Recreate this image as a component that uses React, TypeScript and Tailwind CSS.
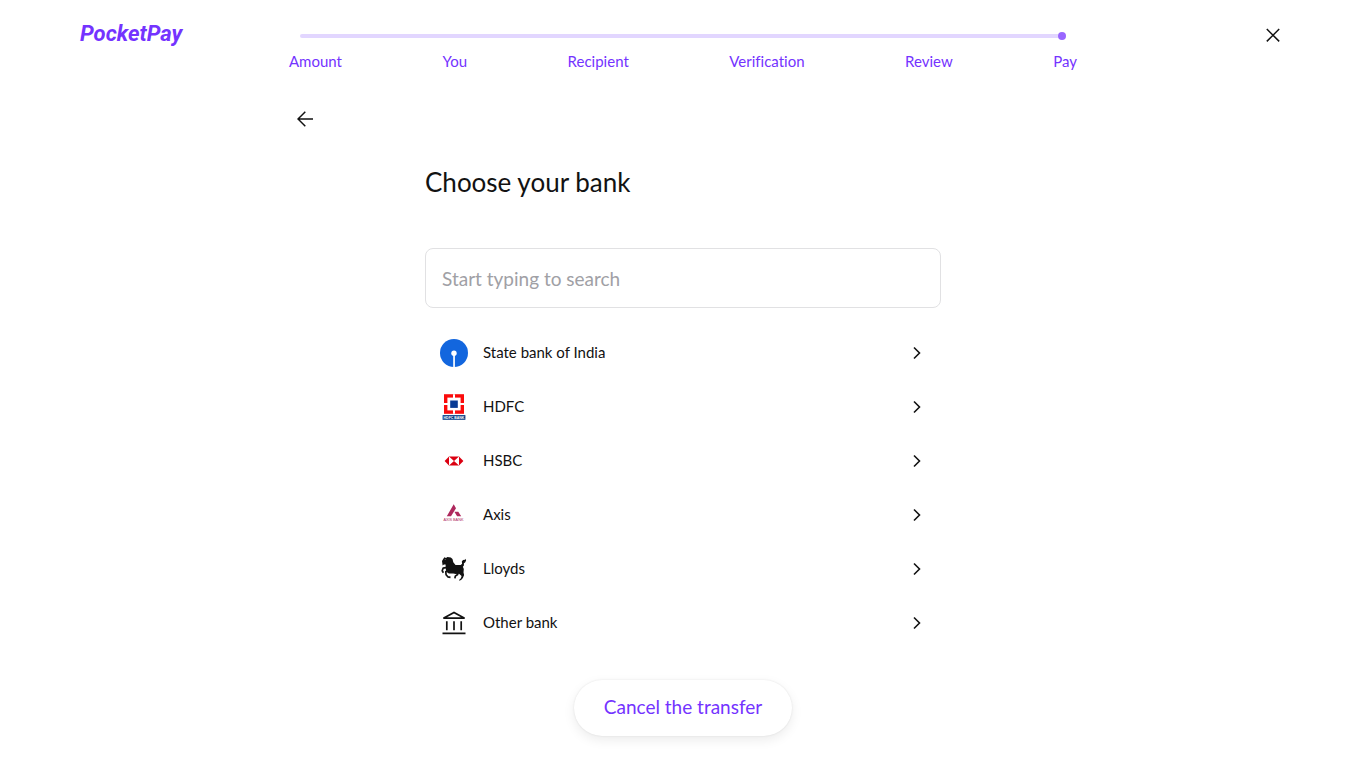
import type { ReactNode } from 'react';

const steps = ['Amount', 'You', 'Recipient', 'Verification', 'Review', 'Pay'];

function SbiLogo() {
  return (
    <svg viewBox="0 0 28 28" className="size-7" aria-hidden="true">
      <circle cx="14" cy="14" r="14" fill="#1266de" />
      <circle cx="14" cy="14.2" r="2.7" fill="#fff" />
      <path d="M13.2 14h1.7v14h-1.7z" fill="#fff" />
    </svg>
  );
}

function HdfcLogo() {
  return (
    <svg viewBox="0 0 28 28" className="size-7" aria-hidden="true">
      <path d="M4 1.2h20v19.6H4z" fill="#fb0b0b" />
      <path d="M7.4 4.6h13.2v12.8H7.4z" fill="#fff" />
      <path d="M13 1.2h2v19.6h-2zM4 10h20v2H4z" fill="#fff" />
      <path d="M10.2 7.5h7.6v7.4h-7.6z" fill="#073b94" />
      <path d="M2.6 22.1h22.8v4.7H2.6z" fill="#073b86" />
      <text x="14" y="25.7" textAnchor="middle" fontSize="3.5" fontWeight="700" fill="#fff" className="font-['Liberation_Sans',sans-serif]">HDFC BANK</text>
    </svg>
  );
}

function HsbcLogo() {
  return (
    <svg viewBox="0 0 28 28" className="size-7" aria-hidden="true">
      <path d="M4.6 14 9 9.4h10l4.4 4.6-4.4 4.6H9z" fill="#db0011" />
      <path d="M9 9.4 14 14l-5 4.6zM19 9.4 14 14l5 4.6z" fill="#fff" />
    </svg>
  );
}

function AxisLogo() {
  return (
    <svg viewBox="0 0 28 28" className="size-7" aria-hidden="true">
      <path d="m13.7 3.3 2.3 4L11 15.2H6.8zM14.4 10.7h3.9l2.9 4.5h-4.1z" fill="#ae285d" />
      <text x="13.4" y="20.2" textAnchor="middle" fontSize="3.8" fill="#ae285d" className="font-['Liberation_Sans',sans-serif]">AXIS BANK</text>
    </svg>
  );
}

function LloydsLogo() {
  return (
    <svg viewBox="0 0 28 28" className="size-7" fill="none" aria-hidden="true">
      <path
        d="M2 5.9 3.2 4 4.4 2.2 6 2.9 7.4 2l3.4.6 1.7 1.5.8 3.2 2.2 2.7h5.2l1.4-1.3-.3-2.3 1.2-1.3 2-.4.6-1 .5 1.9-1 1.9-1.2.7v2.3l-1 1.2.9 2.2-.3 3.6.6 2.6-1.2 3-1.8 2-2 .7.2-1.1 1.6-1.4.7-2.2-2.6-2.4-3.2.3-2.6-.6-4.3.2-2-1.4-1.1-3-.2-4.7-1.7.1-1.3 1z"
        fill="#121212"
      />
      <path d="m4.4 4.4.9-.5.5.7z" fill="#fff" />
      <path d="M7.4 12.4 3.1 13.2 2.2 15.8l1.2 1.9M8.3 14.9l-2.5 1.9.3 3 1.7 2 2.7.5M18 17.3l-.4 2.2-2.3 1.6-.4 2.2" stroke="#121212" strokeWidth="1.7" strokeLinejoin="round" />
    </svg>
  );
}

function OtherBankIcon() {
  return (
    <svg viewBox="0 0 28 28" className="size-7" fill="none" stroke="#121212" strokeWidth="1.7" aria-hidden="true">
      <path d="M3.4 9.2 14 3.5l10.6 5.7zM2.5 24.3h23M6.8 12.3v9M14 12.3v9M21.2 12.3v9" />
    </svg>
  );
}

const banks: { name: string; logo: ReactNode }[] = [
  { name: 'State bank of India', logo: <SbiLogo /> },
  { name: 'HDFC', logo: <HdfcLogo /> },
  { name: 'HSBC', logo: <HsbcLogo /> },
  { name: 'Axis', logo: <AxisLogo /> },
  { name: 'Lloyds', logo: <LloydsLogo /> },
  { name: 'Other bank', logo: <OtherBankIcon /> },
];

export default function App() {
  return (
    <div className="min-h-screen bg-white pb-8 font-['Lato',sans-serif] text-[#121212] [font-variant-ligatures:none]">
      <header className="grid grid-cols-[1fr_minmax(0,788px)_1fr] items-start px-20">
        <a href="#" className="justify-self-start pt-5 font-['Roboto',sans-serif] text-[22px] leading-7 font-bold text-[#7433ff] italic">
          PocketPay
        </a>
        <nav aria-label="Transfer progress" className="pt-8">
          <div className="mx-[11px] flex h-2 items-center">
            <div className="h-1 grow rounded-l-full bg-[#e2d6ff]" />
            <div className="size-2 rounded-full bg-[#9966ff]" />
          </div>
          <ol className="mt-[11px] flex justify-between text-[15px] leading-5 text-[#7433ff]">
            {steps.map((step) => (
              <li key={step} aria-current={step === 'Pay' ? 'step' : undefined}>{step}</li>
            ))}
          </ol>
        </nav>
        <button type="button" aria-label="Close" className="mt-6 justify-self-end pr-1.5">
          <svg viewBox="0 0 14 22" className="h-[22px] w-3.5" fill="none" stroke="#121212" strokeWidth="1.5" aria-hidden="true">
            <path d="m.8 5 12.4 12.4M13.2 5 .8 17.4" />
          </svg>
        </button>
      </header>

      <div className="mx-auto mt-[37px] max-w-[788px] px-2">
        <button type="button" aria-label="Back" className="block">
          <svg viewBox="0 0 16 22" className="h-[22px] w-4" fill="none" stroke="#121212" strokeWidth="1.5" aria-hidden="true">
            <path d="M16 11H1M8.3 3.7 1 11l7.3 7.3" />
          </svg>
        </button>
      </div>

      <main className="mx-auto mt-9 flex max-w-[516px] flex-col">
        <h1 className="text-[26px] leading-8">Choose your bank</h1>
        <input
          type="search"
          aria-label="Search for a bank"
          placeholder="Start typing to search"
          className="mt-[50px] h-[60px] rounded-lg border border-[#e1e1e3] px-4 text-[19px] outline-none placeholder:text-[#a0a0a5] focus:border-[#7433ff]"
        />
        <ul className="mt-[18px]">
          {banks.map((bank) => (
            <li key={bank.name}>
              <button type="button" className="flex h-[54px] w-full items-center gap-[15px] pr-5 pl-[15px] text-left text-[15px] leading-5">
                {bank.logo}
                <span className="grow pb-0.5">{bank.name}</span>
                <svg viewBox="0 0 8 14" className="h-3.5 w-2" fill="none" stroke="#121212" strokeWidth="1.6" aria-hidden="true">
                  <path d="m1 1.5 5.5 5.5L1 12.5" />
                </svg>
              </button>
            </li>
          ))}
        </ul>
        <button type="button" className="mt-[30px] h-14 self-center rounded-full bg-white px-[30px] pb-0.5 text-[19px] text-[#7433ff] shadow-[0_0_2px_rgba(0,0,0,0.1),0_4px_12px_rgba(0,0,0,0.08)]">
          Cancel the transfer
        </button>
      </main>
    </div>
  );
}
